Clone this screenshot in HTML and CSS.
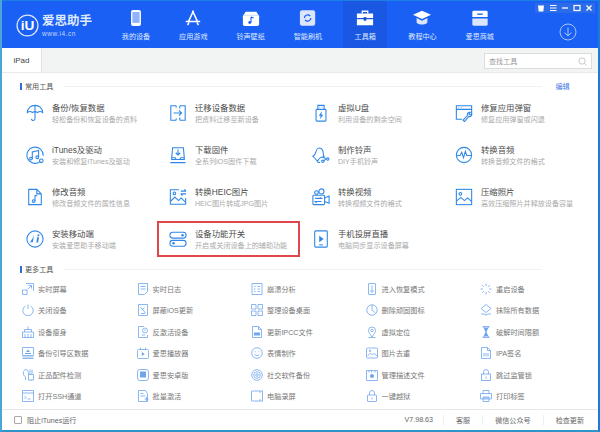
FILE: index.html
```html
<!DOCTYPE html>
<html lang="zh-CN">
<head>
    <meta charset="UTF-8">
    <meta name="viewport" content="width=device-width, initial-scale=1.0">
    <title>爱思助手</title>
    <link rel="stylesheet" href="styles.css">
</head>
<body>
<div class="window">
    <header class="topbar">
        <div class="logo">
            <svg class="logo-mark" viewBox="0 0 22 22"><circle cx="11" cy="11" r="10"/><text x="11" y="15.5" text-anchor="middle">iU</text></svg>
            <div class="logo-text">
                <div class="logo-name">爱思助手</div>
                <div class="logo-url">www.i4.cn</div>
            </div>
        </div>
        <nav class="nav">
            <div class="nav-item">
                <svg viewBox="0 0 20 20"><rect x="4.5" y="1" width="11" height="18" rx="2.2" fill="#fff"/><rect x="6" y="3.4" width="8" height="12" fill="#8fb2fa"/></svg>
                <span>我的设备</span>
            </div>
            <div class="nav-item">
                <svg viewBox="0 0 20 20"><path d="M10.5 2 5 14M9.5 2 15 14M2 14h16M4 18l1.5-3M16 18l-1.5-3" fill="none" stroke="#fff" stroke-width="1.7"/></svg>
                <span>应用游戏</span>
            </div>
            <div class="nav-item">
                <svg viewBox="0 0 20 20"><path d="M4 3h12l3 5v9a2 2 0 0 1-2 2H3a2 2 0 0 1-2-2V8z" fill="#fff"/><path d="M1 7h18" stroke="#c9d9fb"/><path d="M10 9v6M10 9l3 1" stroke="#1a5ff2" stroke-width="1.2" fill="none"/><circle cx="8.6" cy="15" r="1.6" fill="#1a5ff2"/></svg>
                <span>铃声壁纸</span>
            </div>
            <div class="nav-item">
                <svg viewBox="0 0 20 20"><rect x="1" y="1.5" width="17" height="17" rx="2.5" fill="#dbe6fd"/><path d="M6 10a3.6 3.6 0 0 1 6.4-2.2M13.2 10a3.6 3.6 0 0 1-6.4 2.2" fill="none" stroke="#1a5ff2" stroke-width="1.4"/></svg>
                <span>智能刷机</span>
            </div>
            <div class="nav-item nav-active">
                <svg viewBox="0 0 20 20"><path d="M7 5V2.5h6V5" fill="none" stroke="#fff" stroke-width="1.5"/><path d="M1 5h18v5H1zM1 11.5h18V18H1z" fill="#fff"/><rect x="8.5" y="9" width="3" height="4" fill="#1a50c8"/></svg>
                <span>工具箱</span>
            </div>
            <div class="nav-item">
                <svg viewBox="0 0 20 20"><path d="M10 2 20 6.5 10 11 0 6.5z" fill="#fff"/><path d="M4 10v5c2 3 10 3 12 0v-5l-6 3z" fill="#dbe6fd"/></svg>
                <span>教程中心</span>
            </div>
            <div class="nav-item">
                <svg viewBox="0 0 20 20"><path d="M3 2h14a1.5 1.5 0 0 1 1.5 1.5V9h-17V3.5A1.5 1.5 0 0 1 3 2z" fill="#fff"/><path d="M1.5 10.5h17V17a1.5 1.5 0 0 1-1.5 1.5H3A1.5 1.5 0 0 1 1.5 17z" fill="#dbe6fd"/><rect x="7" y="5" width="6" height="1.5" fill="#1a5ff2"/></svg>
                <span>爱思商城</span>
            </div>
        </nav>
        <svg class="download" viewBox="0 0 18 18"><circle cx="9" cy="9" r="8"/><path d="M9 4.5V13M5.5 9.5 9 13l3.500-3.500"/></svg>
        <div class="win-btns">
            <span class="win-btn"><svg viewBox="0 0 10 10"><path d="M2 2.5h6L7.300 8.500H2.700z" fill="#fff"/></svg></span>
            <span class="win-btn"><svg viewBox="0 0 10 10"><path d="M2 2.5h6.500M2 5h6.500M2 7.500h6.500" stroke="#fff"/></svg></span>
            <span class="win-btn"><svg viewBox="0 0 10 10"><path d="M2 5h6" stroke="#fff" stroke-width="1.300"/></svg></span>
            <span class="win-btn"><svg viewBox="0 0 10 10"><rect x="2" y="2.5" width="6" height="5" fill="none" stroke="#fff" stroke-width="1.200"/></svg></span>
            <span class="win-btn"><svg viewBox="0 0 10 10"><path d="m2.500 2.500 5 5M7.500 2.500l-5 5" stroke="#fff" stroke-width="1.300"/></svg></span>
        </div>
    </header>

    <div class="tabbar">
        <div class="tab">iPad</div>
        <div class="search">
            <span>查找工具</span>
            <svg viewBox="0 0 10 10"><circle cx="4.5" cy="4.5" r="3.5"/><path d="m7 7 2.500 2.500"/></svg>
        </div>
    </div>

    <main class="content">
        <div class="section-head">
            <i></i><span class="section-name">常用工具</span><b></b><span class="section-edit">编辑</span>
        </div>
        <div class="tools">
            <div class="tool">
                <svg class="ico" viewBox="0 0 20 20"><path d="M1.500 9.500a8.500 8 0 0 1 17 0c-2-1.500-4-1.500-5.500 0-1.500-1-4.500-1-6 0-1.500-1.500-3.500-1.500-5.500 0zM10 1.500V16a2 2 0 0 1-4 .5"/></svg>
                <div class="tool-text"><div class="tool-name">备份/恢复数据</div><div class="tool-desc">轻松备份和恢复设备的资料</div></div>
            </div>
            <div class="tool">
                <svg class="ico" viewBox="0 0 20 20"><path d="M8 2H2v16h6M12 2h6v16h-6M5 10h9M11 7l3 3-3 3M8 2v2M8 16v2M12 2v3M12 15v3"/></svg>
                <div class="tool-text"><div class="tool-name">迁移设备数据</div><div class="tool-desc">把资料迁移至新设备</div></div>
            </div>
            <div class="tool">
                <svg class="ico" viewBox="0 0 20 20"><rect x="4.500" y="6" width="11" height="13" rx="1"/><path d="M6.500 6V1.500h7V6M8.500 3.500h.5M11 3.500h.5"/><path class="solid" d="m11 8-3.500 5h2L9 17l3.500-5h-2z"/></svg>
                <div class="tool-text"><div class="tool-name">虚拟U盘</div><div class="tool-desc">利用设备的剩余空间</div></div>
            </div>
            <div class="tool">
                <svg class="ico" viewBox="0 0 20 20"><path d="M8 17H1.500V2h17v9M1.500 6h17M4 4h.5M6.500 4h.5"/><path d="m9 18 5-5.500c-.8-2 1-3.800 3-3.200l-1.500 1.700 1.300 1.300 1.700-1.500c.5 2-1.200 3.800-3.200 3L10.500 19.500z"/></svg>
                <div class="tool-text"><div class="tool-name">修复应用弹窗</div><div class="tool-desc">修复应用弹窗或闪退</div></div>
            </div>

            <div class="tool">
                <svg class="ico" viewBox="0 0 20 20"><path d="M16 17a9 9 0 1 1 3-6"/><path d="M7 14V6.500l7-1.500V12.500"/><circle cx="5.500" cy="14" r="1.500"/><circle cx="12.500" cy="12.500" r="1.500"/><circle cx="17" cy="16.500" r="2"/></svg>
                <div class="tool-text"><div class="tool-name">iTunes及驱动</div><div class="tool-desc">安装和修复iTunes及驱动</div></div>
            </div>
            <div class="tool">
                <svg class="ico" viewBox="0 0 20 20"><path d="M4 2h12l1 11v2H3v-2zM3 13h4l1 2h4l1-2h4M1.500 18.500h17"/><path d="M10 4v6M7.500 7.500 10 10l2.500-2.500"/></svg>
                <div class="tool-text"><div class="tool-name">下载固件</div><div class="tool-desc">全系列iOS固件下载</div></div>
            </div>
            <div class="tool">
                <svg class="ico" viewBox="0 0 20 20"><path d="M1 11.500c2-1 3-3 3.500-5.500C5 3 8 1 10.500 3c1.500 1 2 3 2 5 0 2 .5 3 1 4-3 0-6 2-7.500 5-1.500-2-3-4-5-5.500z"/><path d="M11.500 12.500 16 14M13 16.500l3-2.500"/><circle cx="17.500" cy="14.500" r="1.300"/><circle cx="12" cy="17" r="1.300"/><path d="M6 17a2 2 0 0 0 3 1"/></svg>
                <div class="tool-text"><div class="tool-name">制作铃声</div><div class="tool-desc">DIY手机铃声</div></div>
            </div>
            <div class="tool">
                <svg class="ico" viewBox="0 0 20 20"><circle cx="10" cy="10" r="8.500"/><path d="M2 10.500h3.500l2-3.500 2 6 2-7 1.500 4.500h5"/></svg>
                <div class="tool-text"><div class="tool-name">转换音频</div><div class="tool-desc">转换音频文件的格式</div></div>
            </div>

            <div class="tool">
                <svg class="ico" viewBox="0 0 20 20"><path d="M12 1.500H3v17h14V6.500zM12 1.500v5h5"/><path d="M10 8v6.500M10 8l2.500 1"/><circle cx="8.500" cy="14.500" r="1.500"/></svg>
                <div class="tool-text"><div class="tool-name">修改音频</div><div class="tool-desc">修改音频文件的属性信息</div></div>
            </div>
            <div class="tool">
                <svg class="ico" viewBox="0 0 20 20"><path d="M11 2H1.500v16h17v-7"/><path d="m1.500 15 5-5 4 4 3-3 5 5"/><circle cx="6" cy="6" r="1.500"/><path d="M13 3.500h6M17 1.500l2 2M19 6.500h-6M15 8.500l-2-2"/></svg>
                <div class="tool-text"><div class="tool-name">转换HEIC图片</div><div class="tool-desc">HEIC图片转成JPG图片</div></div>
            </div>
            <div class="tool">
                <svg class="ico" viewBox="0 0 20 20"><rect x="1" y="8" width="13" height="10.500" rx="1"/><path d="m14 11 5-2v8l-5-2"/><circle cx="5" cy="5" r="2"/><circle cx="10.500" cy="3.800" r="2.800"/><path d="M3.500 11.500h7l-1.500-1M10.500 15h-7l1.500 1.500"/></svg>
                <div class="tool-text"><div class="tool-name">转换视频</div><div class="tool-desc">转换视频文件的格式</div></div>
            </div>
            <div class="tool">
                <svg class="ico" viewBox="0 0 20 20"><rect x="1.500" y="1.500" width="17" height="17"/><circle cx="6" cy="6.500" r="1.500"/><path d="m1.500 14.500 5-4 4 3.500 3.500-3 4.500 4"/></svg>
                <div class="tool-text"><div class="tool-name">压缩照片</div><div class="tool-desc">高效压缩照片并释放设备容量</div></div>
            </div>

            <div class="tool">
                <svg class="ico" viewBox="0 0 20 20"><circle cx="10" cy="10" r="9"/><path class="solid" d="m8.500 5-1 4-3 4.500h3l.7-3zM12.500 8h2l-1 6h-2zM13 5h2l-.4 2h-2z"/></svg>
                <div class="tool-text"><div class="tool-name">安装移动端</div><div class="tool-desc">安装爱思助手移动端</div></div>
            </div>
            <div class="tool tool-marked">
                <svg class="ico" viewBox="0 0 20 20"><rect x="1" y="2.500" width="18" height="6.500" rx="3.250"/><rect x="1" y="11.500" width="18" height="6.500" rx="3.250"/><circle class="solid" cx="15" cy="5.750" r="1.400"/><circle class="solid" cx="5" cy="14.750" r="1.400"/></svg>
                <div class="tool-text"><div class="tool-name">设备功能开关</div><div class="tool-desc">开启或关闭设备上的辅助功能</div></div>
            </div>
            <div class="tool">
                <svg class="ico" viewBox="0 0 20 20"><rect x="3" y="1" width="14" height="18" rx="1"/><path class="solid" d="m8 6.500 5 3.500-5 3.500z"/><path d="M8 16.500h4"/></svg>
                <div class="tool-text"><div class="tool-name">手机投屏直播</div><div class="tool-desc">电脑同步显示设备屏幕</div></div>
            </div>
        </div>

        <div class="section-head section-more">
            <i></i><span class="section-name">更多工具</span><b></b>
        </div>
        <div class="more">
            <div class="more-item"><svg class="ico" viewBox="0 0 12 12"><path d="M4 .5h7.500V8M.5 7h4.500v4.500H.5zM5.500 6.500 9.500 2.500M6.500 2.500h3v3"/></svg>实时屏幕</div>
            <div class="more-item"><svg class="ico" viewBox="0 0 12 12"><path d="M1.500.5h9v8l-3 3h-6zM3.500 3.500h5M3.500 6h5"/></svg>实时日志</div>
            <div class="more-item"><svg class="ico" viewBox="0 0 12 12"><path d="M1 .5h10v11H1zM3 3.500h1.500M6.500 3.500H9M3 6h1.500M6.500 6H9M3 8.500h1.500M6.500 8.500H9"/></svg>崩溃分析</div>
            <div class="more-item"><svg class="ico" viewBox="0 0 12 12"><rect x="2.500" y=".5" width="7" height="11" rx=".5"/><path d="M6 2.500V6"/><circle cx="6" cy="8" r="1.200"/></svg>进入恢复模式</div>
            <div class="more-item"><svg class="ico" viewBox="0 0 12 12"><path d="M6 .5V3M6 9v2.500M.5 6H3M9 6h2.500M2 2l1.800 1.800M8.200 8.200 10 10M10 2 8.200 3.800M3.800 8.200 2 10"/></svg>重启设备</div>

            <div class="more-item"><svg class="ico" viewBox="0 0 12 12"><path d="M3.500 2a5.200 5.200 0 1 0 5 0M6 .5V5"/></svg>关闭设备</div>
            <div class="more-item"><svg class="ico" viewBox="0 0 12 12"><path d="M1.500.5h9v11h-9zM3.500 3l5 6M4 9.500h4M7.500 3.500l-2 2"/></svg>屏蔽iOS更新</div>
            <div class="more-item"><svg class="ico" viewBox="0 0 12 12"><path d="M.5.5H5V5H.5zM7 .5h4.500V5H7zM.5 7H5v4.500H.5zM7 7h4.500v4.500H7z"/></svg>整理设备桌面</div>
            <div class="more-item"><svg class="ico" viewBox="0 0 12 12"><circle cx="6" cy="6" r="5.200"/><path d="M6 .8V6l3.500 3"/></svg>删除顽固图标</div>
            <div class="more-item"><svg class="ico" viewBox="0 0 12 12"><path d="m6 .5 5 4-5 4-5-4zM1 10h4l1 1.500L7 10h4"/></svg>抹除所有数据</div>

            <div class="more-item"><svg class="ico" viewBox="0 0 12 12"><path d="M.5 6h11v5.500H.5zM2.500 6V3.500h7V6M6 3.500v-3M3 8v3.500M6 8v3.500M9 8v3.500"/></svg>设备瘦身</div>
            <div class="more-item"><svg class="ico" viewBox="0 0 12 12"><path d="M7 .5H1.500v11h9V9"/><circle cx="8" cy="4.500" r="2.500"/><path d="M8 3.500V5M5 9h3"/></svg>反激活设备</div>
            <div class="more-item"><svg class="ico" viewBox="0 0 12 12"><path d="M7.500.5h-6v11h9v-8zM7.500.5v3h3"/><path class="solid" d="M3 6.500h6v3H3z"/></svg>更新IPCC文件</div>
            <div class="more-item"><svg class="ico" viewBox="0 0 12 12"><path d="M6 11C4 8 2.500 6.500 2.500 4.500a3.500 3.500 0 0 1 7 0C9.500 6.500 8 8 6 11z"/><circle cx="6" cy="4.500" r="1.200"/><path d="M2.500 11.500h7"/></svg>虚拟定位</div>
            <div class="more-item"><svg class="ico" viewBox="0 0 12 12"><path d="M2.500.5h7M2.500 11.500h7M3.500.5c0 3 5 3.500 5 0M3.500 11.500c0-3 5-3.500 5 0"/><path class="solid" d="M3.500 1.500h5L6.500 6l2 4.500h-5L5.500 6z"/></svg>破解时间限额</div>

            <div class="more-item"><svg class="ico" viewBox="0 0 12 12"><path d="M.5.5h11v8H.5zM.5 10h11M.5 11.500h11"/><path class="solid" d="m6 2.500 2 2.500H4zM3 6h6v1H3z"/></svg>备份引导区数据</div>
            <div class="more-item"><svg class="ico" viewBox="0 0 12 12"><rect x=".5" y="2.500" width="11" height="9" rx="1"/><path d="M3.500.5v2M8.500.5v2"/><path class="solid" d="m4.800 5 3 2-3 2z"/></svg>爱思播放器</div>
            <div class="more-item"><svg class="ico" viewBox="0 0 12 12"><circle cx="6" cy="6" r="5.300"/><path d="M4 4.200v1M8 4.200v1M3.500 7.500c1 1.500 4 1.500 5 0"/></svg>表情制作</div>
            <div class="more-item"><svg class="ico" viewBox="0 0 12 12"><rect x=".5" y="1" width="11" height="10" rx="1"/><path d="m1.500 9 3-3 2 2 1.500-1.500 3 2.500"/><circle cx="4" cy="3.800" r=".8"/></svg>图片去重</div>
            <div class="more-item"><svg class="ico" viewBox="0 0 12 12"><path d="M7.500.5h-6v11h9v-8zM7.500.5v3h3M4 6v3.500M6 6v3.500M8 6v3.500"/></svg>IPA签名</div>

            <div class="more-item"><svg class="ico" viewBox="0 0 12 12"><path d="M3.500 11V8c-3-1.500-3-7 .5-7.500C6 .5 6.500 3 6.500 5M6.500 5.500h5V11h-5zM8 .5v5M10 .5v5M9 11v1"/></svg>正品配件检测</div>
            <div class="more-item"><svg class="ico" viewBox="0 0 12 12"><rect x=".5" y=".5" width="11" height="11" rx="2.500"/><path class="solid" d="M3 2.500h6v6H3z"/></svg>爱思安卓版</div>
            <div class="more-item"><svg class="ico" viewBox="0 0 12 12"><circle cx="6" cy="6" r="5.300"/><circle cx="6" cy="6" r="3.300"/><circle cx="6" cy="6" r="1.300"/></svg>社交软件备份</div>
            <div class="more-item"><svg class="ico" viewBox="0 0 12 12"><path d="M.5 1.500h11v10H.5zM3 1.500v2M9 1.500v2M5.500 1.500v2"/><circle class="solid" cx="6" cy="7" r="2"/></svg>管理描述文件</div>
            <div class="more-item"><svg class="ico" viewBox="0 0 12 12"><rect x="1.500" y="5" width="9" height="6.500"/><path d="M3.500 5V3a2.500 2.500 0 0 1 5 0v2M6 7.500v2"/></svg>跳过监管锁</div>

            <div class="more-item"><svg class="ico" viewBox="0 0 12 12"><path d="M.5.5h11v11H.5zM.5 3h11M2.500 6 4 7.500 2.500 9M5.500 9h3"/></svg>打开SSH通道</div>
            <div class="more-item"><svg class="ico" viewBox="0 0 12 12"><path d="M8.500.5h-7v11h9v-8zM3.500 3.500h3M3.500 6h5M9.500 7v4M7.500 9h4"/></svg>批量激活</div>
            <div class="more-item"><svg class="ico" viewBox="0 0 12 12"><path d="M9 1H.5v10H9M9 1h2.500v10H9M9 1v2M9 9v2"/></svg>电脑录屏</div>
            <div class="more-item"><svg class="ico" viewBox="0 0 12 12"><rect x="1.500" y="5" width="9" height="6.500" rx=".5"/><path d="M3.500 5V3a2.500 2.500 0 0 1 5 0v2M6 7.500v2"/></svg>一键越狱</div>
            <div class="more-item"><svg class="ico" viewBox="0 0 12 12"><path d="M3 3.500v-3h6v3M.5 3.500h11V9H.5zM3 7h6v4.500H3z"/><path class="solid" d="M3 7.500h6v1H3z"/></svg>打印标签</div>
        </div>
    </main>

    <footer class="footer">
        <label class="itunes"><span class="checkbox"></span>阻止iTunes运行</label>
        <div class="footer-links">
            <span class="version">V7.98.63</span>
            <span class="link">客服</span>
            <span class="link">微信公众号</span>
            <span class="link">检查更新</span>
        </div>
    </footer>
</div>
</body>
</html>
```

FILE: styles.css
```css
html, body {
    margin: 0;
    padding: 0;
}

body {
    font-family: "Liberation Sans", "Noto Sans CJK SC", sans-serif;
    color: #555;
}

.window {
    box-sizing: border-box;
    width: 600px;
    height: 432px;
    display: flex;
    flex-direction: column;
    background-color: #fff;
    border-left: 2px solid #4aa6d8;
    border-right: 2px solid #1d7ad8;
    border-bottom: 2px solid #2f94c8;
    overflow: hidden;
}

/* top bar */
.topbar {
    position: relative;
    flex: none;
    height: 48px;
    box-sizing: border-box;
    display: flex;
    background-color: #1a60f5;
    border-top: 1px solid #1c7fe4;
    color: #dfe9fd;
}

.logo {
    width: 112px;
    flex: none;
    display: flex;
    align-items: center;
    padding: 1px 0 0 14px;
    box-sizing: border-box;
    gap: 3px;
}

.logo-mark {
    width: 23px;
    height: 23px;
    fill: none;
    stroke: #dbe6fd;
    stroke-width: 1.2;
}

.logo-mark text {
    font-size: 13px;
    font-weight: bold;
    fill: #fff;
    stroke: none;
}

.logo-name {
    font-size: 12.5px;
    line-height: 16px;
    font-weight: bold;
    color: #dfe9fd;
}

.logo-url {
    font-size: 6.5px;
    line-height: 9px;
    letter-spacing: .5px;
    color: #c5d7fb;
}

.nav {
    display: flex;
    gap: 13.3px;
}

.nav-item {
    width: 44px;
    height: 47px;
    display: flex;
    flex-direction: column;
    align-items: center;
    box-sizing: border-box;
    padding-top: 8px;
    font-size: 7.1px;
    line-height: 10px;
}

.nav-item svg {
    width: 18px;
    height: 18px;
    margin-bottom: 5px;
}

.nav-active {
    background-color: #1a58e4;
}

.download {
    position: absolute;
    left: 557px;
    top: 22px;
    width: 18px;
    height: 18px;
    fill: none;
    stroke: #a9c4fa;
    stroke-width: 1;
}

.win-btns {
    position: absolute;
    right: 3px;
    top: 2px;
    display: flex;
}

.win-btn {
    width: 12px;
    height: 10px;
    display: flex;
    justify-content: center;
    background-color: #2c6ce8;
}

.win-btn svg {
    width: 10px;
    height: 10px;
}

/* tabs */
.tabbar {
    flex: none;
    height: 25px;
    display: flex;
    justify-content: space-between;
    background-color: #f2f3f3;
    border-bottom: 1px solid #eaeaea;
    box-sizing: border-box;
}

.tab {
    width: 40px;
    background-color: #fff;
    border-right: 1px solid #e2e2e2;
    box-sizing: border-box;
    font-size: 8px;
    line-height: 25px;
    text-align: center;
    color: #444;
}

.search {
    width: 108px;
    height: 16px;
    margin: 5px 6px 0 0;
    box-sizing: border-box;
    display: flex;
    justify-content: space-between;
    align-items: center;
    padding: 0 4px;
    background-color: #fff;
    border: 1px solid #dcdcdc;
    font-size: 7.1px;
    color: #999;
}

.search svg {
    width: 9px;
    height: 9px;
    fill: none;
    stroke: #aaa;
    stroke-width: .7;
}

/* sections */
.content {
    flex: 1;
    min-height: 0;
}

.section-head {
    height: 14px;
    margin-top: 6px;
    display: flex;
    align-items: center;
    padding-left: 18px;
    font-size: 7.1px;
}

.section-head i {
    width: 2px;
    height: 7px;
    margin-right: 3px;
    background-color: #2d6fd8;
}

.section-head b {
    width: 478px;
    height: 1px;
    margin-left: 11px;
    background-color: #f2f2f2;
}

.section-edit {
    margin-left: 13px;
    color: #4b7be5;
}

.section-more {
    margin-top: 5px;
}

.tools {
    display: grid;
    grid-template-columns: repeat(4, 143px);
    grid-auto-rows: 36px;
    row-gap: 6px;
    margin: 2px 0 0 12px;
}

.tool {
    display: flex;
    align-items: center;
    box-sizing: border-box;
    padding-left: 12px;
    gap: 8px;
}

.tool-marked {
    outline: 2px solid #e0474a;
    outline-offset: -2px;
}

.ico {
    flex: none;
    fill: none;
    stroke: #2f88e8;
}

.ico .solid {
    fill: #2f88e8;
    stroke: none;
}

.tool .ico {
    width: 18px;
    height: 18px;
    stroke-width: 1.2;
}

.tool-text {
    padding-top: 1px;
}

.tool-name {
    font-size: 8.4px;
    line-height: 12px;
    color: #4c4c4c;
}

.tool-desc {
    font-size: 7.1px;
    line-height: 12px;
    color: #aaa;
}

.more {
    display: grid;
    grid-template-columns: repeat(5, 114.5px);
    grid-auto-rows: 21.5px;
    margin: 2px 0 0 20px;
}

.more-item {
    display: flex;
    align-items: center;
    gap: 4px;
    font-size: 7.2px;
    color: #777;
}

.more-item .ico {
    width: 12px;
    height: 12px;
    stroke: #6ea6ee;
    stroke-width: .8;
}

.more-item .ico .solid {
    fill: #6ea6ee;
}

/* footer */
.footer {
    flex: none;
    height: 21px;
    display: flex;
    justify-content: space-between;
    align-items: center;
    border-top: 1px solid #e8e8e8;
    box-sizing: border-box;
    padding: 0 2px 0 12px;
    font-size: 7.1px;
    color: #666;
}

.itunes {
    display: flex;
    align-items: center;
    gap: 5px;
}

.checkbox {
    width: 8px;
    height: 8px;
    border: 1px solid #aaa;
    border-radius: 1px;
    box-sizing: border-box;
}

.footer-links {
    display: flex;
    align-items: center;
}

.version {
    margin-right: 10px;
}

.link {
    border-left: 1px solid #eee;
    padding-left: 12px;
    margin-right: 12px;
}
```
